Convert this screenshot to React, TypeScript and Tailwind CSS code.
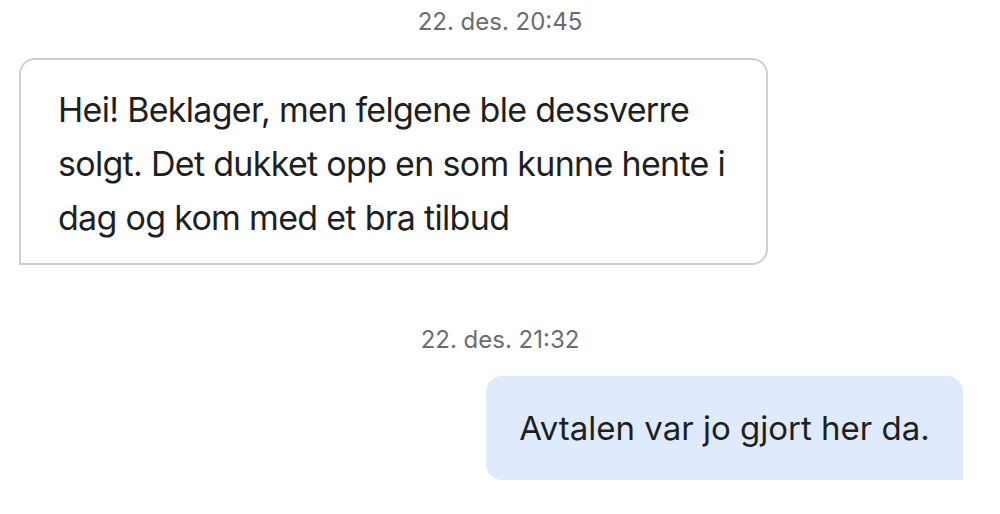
export default function App() {
  return (
    <div
      className="w-[1000px] h-[514px] bg-white overflow-hidden flex flex-col text-[#1f1f23]"
      style={{ fontFamily: "Inter, 'Noto Sans', sans-serif" }}
    >
      <div className="pt-[7px] text-center text-[24px] leading-[30px] text-[#6c6c70]">22. des. 20:45</div>
      <div className="mt-[21px] ml-[19px] w-[749px] rounded-[16px] rounded-bl-none border-2 border-[#cfcfd3] pl-[37px] pr-[20px] pt-[23px] pb-[18px]">
        <p className="text-[34px] leading-[54px] tracking-[-0.7px]">
          Hei! Beklager, men felgene ble dessverre
          <br />
          solgt. Det dukket opp en som kunne hente i
          <br />
          dag og kom med et bra tilbud
        </p>
      </div>
      <div className="mt-[60px] text-center text-[24px] leading-[30px] text-[#6c6c70]">22. des. 21:32</div>
      <div className="mt-[21px] flex justify-end pr-[37px]">
        <div className="w-[477px] h-[104px] rounded-[16px] rounded-br-none bg-[#dfeafc] flex items-center justify-center text-[33px] pt-[1px]">
          Avtalen var jo gjort her da.
        </div>
      </div>
    </div>
  )
}
